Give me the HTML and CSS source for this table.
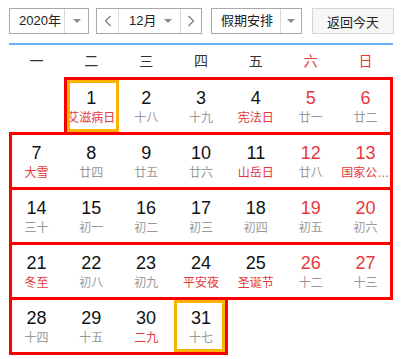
FILE: index.html
```html
<!DOCTYPE html>
<html lang="zh-CN">
<head>
<meta charset="utf-8">
<title>日历</title>
<link rel="stylesheet" href="styles.css">
</head>
<body>
<div class="cal">
  <div class="toolbar">
    <div class="select year">
      <span class="val">2020年</span>
      <span class="drop"><i class="tri"></i></span>
    </div>
    <div class="select month">
      <span class="nav"><svg width="8" height="12" viewBox="0 0 8 12"><polyline points="6.5,1 1.5,6 6.5,11" fill="none" stroke="#76808a" stroke-width="1.3"/></svg></span>
      <span class="val mval">12月<i class="tri"></i></span>
      <span class="nav"><svg width="8" height="12" viewBox="0 0 8 12"><polyline points="1.5,1 6.5,6 1.5,11" fill="none" stroke="#76808a" stroke-width="1.3"/></svg></span>
    </div>
    <div class="select hol">
      <span class="val">假期安排</span>
      <span class="drop"><i class="tri"></i></span>
    </div>
    <button class="today">返回今天</button>
  </div>

  <div class="weekdays">
    <span>一</span><span>二</span><span>三</span><span>四</span><span>五</span><span class="we">六</span><span class="we">日</span>
  </div>

  <div class="weeks">
    <div class="week first">
      <div class="day picked"><div class="num">1</div><div class="lunar fest">艾滋病日</div></div>
      <div class="day"><div class="num">2</div><div class="lunar">十八</div></div>
      <div class="day"><div class="num">3</div><div class="lunar">十九</div></div>
      <div class="day"><div class="num">4</div><div class="lunar fest">宪法日</div></div>
      <div class="day we"><div class="num">5</div><div class="lunar">廿一</div></div>
      <div class="day we"><div class="num">6</div><div class="lunar">廿二</div></div>
    </div>
    <div class="week">
      <div class="day"><div class="num">7</div><div class="lunar fest">大雪</div></div>
      <div class="day"><div class="num">8</div><div class="lunar">廿四</div></div>
      <div class="day"><div class="num">9</div><div class="lunar">廿五</div></div>
      <div class="day"><div class="num">10</div><div class="lunar">廿六</div></div>
      <div class="day"><div class="num">11</div><div class="lunar fest">山岳日</div></div>
      <div class="day we"><div class="num">12</div><div class="lunar">廿八</div></div>
      <div class="day we"><div class="num">13</div><div class="lunar fest">国家公祭日</div></div>
    </div>
    <div class="week">
      <div class="day"><div class="num">14</div><div class="lunar">三十</div></div>
      <div class="day"><div class="num">15</div><div class="lunar">初一</div></div>
      <div class="day"><div class="num">16</div><div class="lunar">初二</div></div>
      <div class="day"><div class="num">17</div><div class="lunar">初三</div></div>
      <div class="day"><div class="num">18</div><div class="lunar">初四</div></div>
      <div class="day we"><div class="num">19</div><div class="lunar">初五</div></div>
      <div class="day we"><div class="num">20</div><div class="lunar">初六</div></div>
    </div>
    <div class="week">
      <div class="day"><div class="num">21</div><div class="lunar fest">冬至</div></div>
      <div class="day"><div class="num">22</div><div class="lunar">初八</div></div>
      <div class="day"><div class="num">23</div><div class="lunar">初九</div></div>
      <div class="day"><div class="num">24</div><div class="lunar fest">平安夜</div></div>
      <div class="day"><div class="num">25</div><div class="lunar fest">圣诞节</div></div>
      <div class="day we"><div class="num">26</div><div class="lunar">十二</div></div>
      <div class="day we"><div class="num">27</div><div class="lunar">十三</div></div>
    </div>
    <div class="week last">
      <div class="day"><div class="num">28</div><div class="lunar">十四</div></div>
      <div class="day"><div class="num">29</div><div class="lunar">十五</div></div>
      <div class="day"><div class="num">30</div><div class="lunar fest">二九</div></div>
      <div class="day picked"><div class="num">31</div><div class="lunar">十七</div></div>
    </div>
  </div>
</div>
</body>
</html>
```

FILE: styles.css
```css
* { box-sizing: border-box; }

body {
  margin: 0;
  background: #fff;
  font-family: "Liberation Sans", "Noto Sans CJK SC", sans-serif;
  color: #222;
}

.cal {
  padding: 8px 0 0 9px;
  width: 394px;
}

/* toolbar */
.toolbar {
  display: flex;
  height: 26px;
}

.select {
  display: flex;
  height: 26px;
  border: 1px solid #a9a9a9;
  background: #fff;
  font-size: 13px;
  line-height: 24px;
  color: #222;
}

.year { width: 80px; margin-right: 7px; }
.month { width: 106px; margin-right: 9px; }
.hol { width: 91px; margin-right: 10px; }

.val {
  padding-left: 9px;
  white-space: nowrap;
}

.year .val { width: 55px; border-right: 1px solid #d9d9d9; }
.hol .val { width: 69px; border-right: 1px solid #d9d9d9; }

.drop {
  flex: 1;
  display: flex;
  align-items: center;
  justify-content: center;
}

.tri {
  display: block;
  width: 0;
  height: 0;
  border-left: 4px solid transparent;
  border-right: 4px solid transparent;
  border-top: 4px solid #8a8a8a;
}

.nav {
  display: flex;
  align-items: center;
  justify-content: center;
}

.month .nav:first-child { width: 22px; border-right: 1px solid #d9d9d9; }
.month .nav:last-child { flex: 1; }

.mval {
  width: 62px;
  display: flex;
  align-items: center;
  justify-content: space-between;
  padding: 0 8px 0 10px;
  border-right: 1px solid #d9d9d9;
}

.today {
  width: 82px;
  height: 26px;
  margin: 0;
  padding: 0;
  border: 1px solid #d4d4d4;
  background: #f7f7f7;
  font-family: inherit;
  font-size: 13px;
  color: #222;
}

/* weekday header */
.weekdays {
  display: grid;
  grid-template-columns: repeat(7, 1fr);
  width: 384px;
  margin-top: 9px;
  border-top: 2px solid #6cb2f5;
  height: 34px;
  line-height: 32px;
  font-size: 14px;
  text-align: center;
  color: #333;
}

.weekdays .we { color: #e8383d; }

/* weeks */
.weeks { width: 384px; }

.week {
  display: grid;
  grid-template-columns: repeat(7, 1fr);
  height: 58px;
  margin-top: -3px;
  outline: 3px solid #ff0000;
  outline-offset: -3px;
}

.week.first {
  margin-top: 0;
  grid-template-columns: repeat(6, 1fr);
  margin-left: calc(100% / 7);
}

.week.last {
  grid-template-columns: repeat(4, 1fr);
  width: calc(400% / 7);
}

.day {
  position: relative;
  min-width: 0;
  padding-top: 10px;
  text-align: center;
}

.num {
  font-size: 18px;
  line-height: 22px;
  color: #111;
}

.day.we .num { color: #e8383d; }

.lunar {
  font-size: 12px;
  line-height: 18px;
  color: #999;
  padding: 0 3px;
  white-space: nowrap;
  overflow: hidden;
  text-overflow: ellipsis;
}

.lunar.fest { color: #e5383b; }

.day.picked::after {
  content: "";
  position: absolute;
  top: 3px;
  bottom: 3px;
  left: 0;
  right: 0;
  border: 3px solid #fbb300;
}

.week > .day.picked:first-child::after { left: 3px; }
.week > .day.picked:last-child::after { right: 3px; }
```
